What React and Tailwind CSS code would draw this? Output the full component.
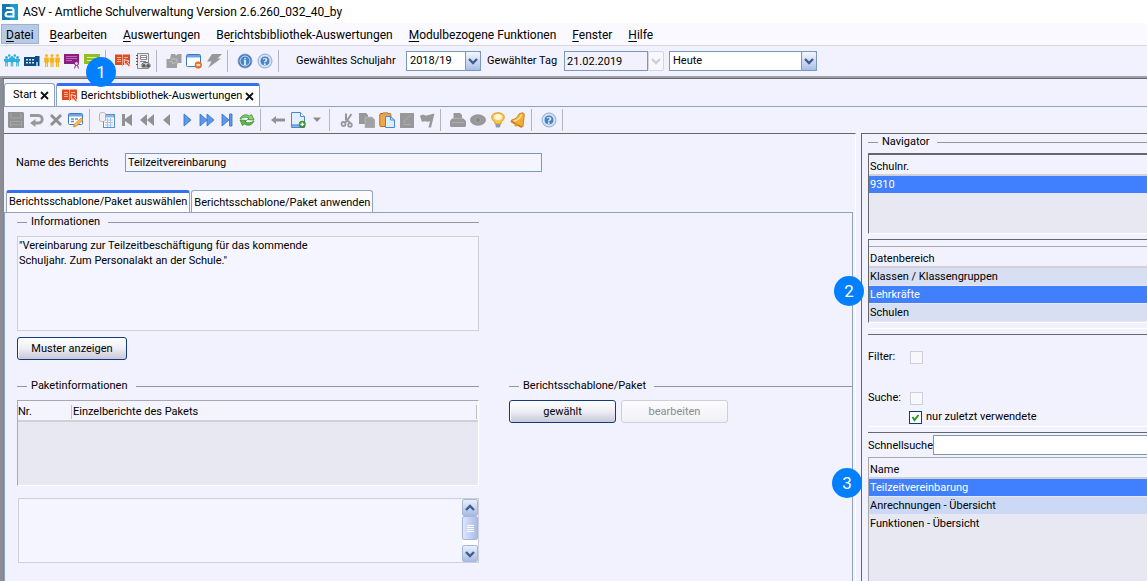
import React from 'react';
import clsx from 'clsx';

const Svg = ({ children, size = 16 }) => (
  <svg width={size} height={size} viewBox="0 0 16 16" className="block shrink-0" aria-hidden="true">{children}</svg>
);

const Pupils = () => (
  <Svg>
    <g fill="#2fb0dc">
      {[2.5, 8, 13.5].map((x) => <circle key={x} cx={x} cy="4.400" r="1.500" />)}
      {[5.2, 10.8].map((x) => <circle key={x} cx={x} cy="2.600" r="1.300" />)}
      <path d="M0 6h5l.2-1.500h5.600L11 6h5v2l-1.200 1V10h-2.600V9H9.300v1H6.700V9H3.800v1H1.200V9L0 8z" />
      <path d="M1.200 10h1v3.500h-1zM2.800 10h1v3.500h-1zM6.800 10h1v3.500h-1zM8.300 10h1v3.500h-1zM12.200 10h1v3.500h-1zM13.800 10h1v3.500h-1z" />
    </g>
  </Svg>
);
const School = () => (
  <Svg>
    <path d="M0 4h11V3h4.500v10H0z" fill="#0f4c81" />
    <path d="M2 6h2v1.500H2zM5 6h2v1.500H5zM8 6h2v1.500H8zM2 9h2v1.500H2zM5 9h2v1.500H5zM8 9h2v1.500H8z" fill="#cfe3f4" />
    <path d="M12 9h2v4h-2z" fill="#8eb8dc" />
  </Svg>
);
const Teachers = () => (
  <Svg>
    <g fill="#f5b21a">
      {[2.5, 8, 13.5].map((x) => (
        <g key={x} transform={`translate(${x} 0)`}>
          <circle cy="2.500" r="1.500" />
          <path d="M-2.300 4.500h4.600v5h-.8V14H.3v-4h-.6v4h-1.200V9.500h-.8z" />
        </g>
      ))}
    </g>
  </Svg>
);
const PurpleBoard = () => (
  <Svg>
    <path d="M0 1h15v10H0z" fill="#8c1d83" />
    <path d="M2 3.500h11M2 5.500h11M2 7.500h6" stroke="#b86cb2" />
    <circle cx="12.500" cy="10.500" r="2" fill="#e6c4e3" stroke="#8c1d83" />
    <path d="M11.500 12.500l-1 3M13.500 12.500l1 3" stroke="#8c1d83" />
  </Svg>
);
const GreenBubble = () => (
  <Svg>
    <path d="M0 1h16v10H8l-3 4v-4H0z" fill="#93c01f" />
    <path d="M3 4.500h10M3 7.500h10" stroke="#dcedb0" />
  </Svg>
);
const RedBook = () => (
  <Svg>
    <path d="M0 1.500h7l.5.700.5-.700h7V12H8l-.5 1-.5-1H0z" fill="#e2491c" />
    <path d="M7.500 2v10" stroke="#f7c0ad" strokeWidth=".8" />
    <path d="M2 4.500h4M2 6.500h4M2 8.500h4M9 4.500h4" stroke="#f7b39d" />
    <path d="M9 6.500l5 1.500-1.500 1.200 2.800 3.800-1.300 1.200-3-3.700-1.200 1.500z" fill="#e2491c" stroke="#fff" strokeWidth=".8" />
  </Svg>
);
const Cabinet = () => (
  <Svg>
    <path d="M2.500.5h11v15h-11z" fill="#e9e9ea" stroke="#8b8b8d" />
    <path d="M5.500 2.500h6v4h-6z" fill="#fff" stroke="#8b8b8d" />
    <path d="M6 4.500h5M5 8.500h6" stroke="#88a" />
    <path d="M1 2.500h2M1 5.500h2M1 8.500h2M1 11.500h2" stroke="#555" />
    <path d="M7 11l2-1.500h4l2 2v2.500H7z" fill="#c8c8ca" stroke="#666" />
    <circle cx="9" cy="12.500" r="1.500" fill="#555" /><circle cx="13" cy="12.500" r="1.500" fill="#555" />
  </Svg>
);
const Puzzle = () => (
  <Svg>
    <path d="M5 1h4l1 1.500L12 1h3.500v9H12l-1 2v3H.5V6H4z" fill="#a0a0a2" />
    <path d="M5 6h6v5M3 9l3-1 1 3 3-2" stroke="#c0c0c2" fill="none" />
  </Svg>
);
const WindowMinus = () => (
  <Svg>
    <rect x=".5" y="1.500" width="14" height="12" rx="1" fill="#fff" stroke="#3c78c8" />
    <path d="M1 2h13v2.500H1z" fill="#6ea2e4" />
    <circle cx="12.300" cy="12" r="3.300" fill="#ee7a2d" stroke="#c95a12" strokeWidth=".6" />
    <path d="M10.500 12h3.600" stroke="#fff" strokeWidth="1.500" />
  </Svg>
);
const Bolt = () => (
  <Svg><path d="M6 1h10l-4.500 4.500H15L2 15l3.500-6.500H1z" fill="#98989a" /></Svg>
);
const RoundIcon = ({ rim, text }) => (
  <Svg>
    <circle cx="8" cy="8" r="7" fill={rim} stroke="#7d9cc4" strokeWidth=".8" />
    <circle cx="8" cy="8" r="5" fill="#4a82c4" stroke="#e8f1fb" strokeWidth=".8" />
    <text x="8" y="11.500" textAnchor="middle" fontSize="10" fontWeight="700" fontFamily="Liberation Serif, serif" fill="#fff">{text}</text>
  </Svg>
);
const Info = () => <RoundIcon rim="#3f79be" text="i" />;
const Help = () => <RoundIcon rim="#cfe0f3" text="?" />;

const Save = () => (
  <Svg>
    <path d="M0 0h15l1 1v15H1l-1-1z" fill="#929294" />
    <path d="M3 1v5h10V1M2.500 15V9.500h11V15M3 12.500h10" stroke="#a4a4a6" fill="none" />
  </Svg>
);
const Undo = () => (
  <Svg>
    <path d="M2 3.500h8.500a3.500 3.500 0 010 7.500H6" fill="none" stroke="#98989a" strokeWidth="2.800" />
    <path d="M7.500 7v8L2 11z" fill="#98989a" />
  </Svg>
);
const Cross = () => (
  <Svg><path d="M3 3l10 10M13 3L3 13" stroke="#909092" strokeWidth="3" /></Svg>
);
const EditForm = () => (
  <Svg>
    <rect x=".5" y="1.500" width="14" height="11" rx="1" fill="#fff" stroke="#3c78c8" />
    <path d="M1 2h13v2.500H1z" fill="#6ea2e4" />
    <path d="M3 7h3M7 7h3M3 9.500h3" stroke="#5d8fd0" strokeWidth="1.500" />
    <path d="M5.500 15l1-3 6.500-6 2 2-6.500 6z" fill="#f8b94e" stroke="#c87f17" strokeWidth=".7" />
  </Svg>
);
const TableDoc = () => (
  <Svg>
    <rect x="4.500" y="2.500" width="11" height="13" fill="#fff" stroke="#5d8fd0" />
    <path d="M5 3h10v2.500H5z" fill="#8db7ea" />
    <path d="M6 8h8M6 10.500h8M6 13h8M8.500 6v9M11.500 6v9" stroke="#a4c2e8" />
    <path d="M.5 2c0-2 6-2 6 0v6c0 2-6 2-6 0z" fill="#f0f0ee" stroke="#a5a5a5" strokeWidth=".8" />
  </Svg>
);
const First = () => <Svg><path d="M3 2h3v5l7-5v12L6 9v5H3z" fill="#929294" /></Svg>;
const Rewind = () => <Svg><path d="M8 2v12L1 8zM15 2v12L8 8z" fill="#929294" /></Svg>;
const Prev = () => <Svg><path d="M11 2v12L4 8z" fill="#929294" /></Svg>;
const Next = () => <Svg><path d="M5 2v12l7-6z" fill="#5c9ae6" stroke="#2f6fc8" strokeWidth=".8" /></Svg>;
const Forward = () => <Svg><path d="M1 2v12l7-6zM8 2v12l7-6z" fill="#5c9ae6" stroke="#2f6fc8" strokeWidth=".8" /></Svg>;
const Last = () => <Svg><path d="M3 2v12l7-6zM10.500 2h2.500v12h-2.500z" fill="#5c9ae6" stroke="#2f6fc8" strokeWidth=".8" /></Svg>;
const Refresh = () => (
  <Svg>
    <path d="M1 7c1.500-4 6-5.500 9.500-3L12.500 2.500 15 8l-6.500-.5 1.500-1.500C7 4.500 4 5 1 7z" fill="#8fd070" stroke="#358a2b" strokeWidth=".8" />
    <path d="M15 9c-1.500 4-6 5.500-9.500 3l-2 1.500L1 8l6.500.5L6 10c3 1.500 6 1 9-1z" fill="#5fb84a" stroke="#358a2b" strokeWidth=".8" />
  </Svg>
);
const Back = () => <Svg><path d="M1 8l5-4v2.500h9v3H6V12z" fill="#929294" /></Svg>;
const NewDoc = () => (
  <Svg>
    <path d="M1.500.5h9l4 4v11h-13z" fill="#e3effc" stroke="#4b86d1" />
    <path d="M2 13.500h9" stroke="#6aa0e2" strokeWidth="2.500" />
    <path d="M10.500.5v4h4" fill="#fff" stroke="#4b86d1" />
    <circle cx="12.300" cy="12.300" r="3.200" fill="#4f9d36" stroke="#357a22" strokeWidth=".6" />
    <path d="M10.500 12.300h3.600M12.300 10.500v3.600" stroke="#fff" strokeWidth="1.200" />
  </Svg>
);
const Caret = () => <Svg size={8}><path d="M0 3h16l-8 9z" fill="#8d8d90" /></Svg>;
const Cut = () => (
  <Svg>
    <path d="M12.500 2L6.500 10.500M7 1.500v6l4.500 3.500" fill="none" stroke="#98989a" strokeWidth="2" />
    <circle cx="4.500" cy="12" r="2" fill="none" stroke="#98989a" strokeWidth="1.800" />
    <circle cx="11" cy="13" r="1.800" fill="none" stroke="#98989a" strokeWidth="1.800" />
  </Svg>
);
const Copy = () => (
  <Svg>
    <path d="M0 1h7l2 2v9H0z" fill="#98989a" />
    <path d="M6 5h7l3 3v8H6z" fill="#a2a2a4" stroke="#bcbcc0" strokeWidth=".7" />
  </Svg>
);
const Paste = () => (
  <Svg>
    <rect x=".8" y="1.500" width="11" height="13" rx="1" fill="#eda84a" stroke="#b56e17" />
    <path d="M4 0h5v3H4z" fill="#c8a474" />
    <path d="M6.500 4.500h5l4 3.500v7.500h-9z" fill="#dfecfc" stroke="#4b86d1" />
    <path d="M11.500 4.500V8h4" fill="none" stroke="#4b86d1" />
  </Svg>
);
const EditDoc = () => (
  <Svg>
    <path d="M1 1h14v15H1z" fill="#98989a" />
    <path d="M5 11l1-3 6-5M4 12.500h8" stroke="#acacae" fill="none" />
  </Svg>
);
const Flag = () => (
  <Svg><path d="M1 4c4-3 5 1 8-1l6.500-1.500L12 15.500H9.500L11 9c-3 2-5-1-8 1z" fill="#98989a" /></Svg>
);
const Printer = () => (
  <Svg>
    <path d="M3.500 1h6.500l2 2v3.500h1.500L16 9v5l-1 1H1l-1-1V9l2-2.500h1.500z" fill="#98989a" />
    <path d="M2 10.500h12M3.500 6.500H12" stroke="#adadaf" />
  </Svg>
);
const Eye = () => (
  <Svg>
    <ellipse cx="8" cy="8" rx="8" ry="5.800" fill="#98989a" />
    <circle cx="8" cy="8" r="2.500" fill="#88888a" stroke="#a6a6a8" />
  </Svg>
);
const Bulb = () => (
  <Svg>
    <path d="M8 .8c-8 0-7.500 7-3 9.200V12h6v-2c4.500-2.200 5-9.200-3-9.200z" fill="#fdc652" stroke="#e09a1e" />
    <ellipse cx="8" cy="5" rx="4" ry="3" fill="#fff6d6" />
    <path d="M5.500 12h5v2l-1 1.500h-3l-1-1.500z" fill="#8d99a8" />
  </Svg>
);
const Bell = () => (
  <Svg>
    <path d="M12 .8c1.500 0 2.300.7 2.300 2.200L13 14.500l-2 .8L1 10l.5-2C5 7.500 8 5 9 2z" fill="#f4ac33" stroke="#bd7610" strokeWidth=".8" />
    <path d="M4 9c4-1 6.500-3.500 7.500-6.500" stroke="#ffe2a0" strokeWidth="1.300" fill="none" />
    <path d="M2 9.500L12 15" stroke="#bd7610" />
    <circle cx="6" cy="13" r="1.600" fill="#e19b25" />
  </Svg>
);

const mainTools = [
  [['Schüler', Pupils], ['Schule', School], ['Lehrkräfte', Teachers], ['Unterricht', PurpleBoard], ['Nachrichten', GreenBubble]],
  [['Berichtsbibliothek', RedBook], ['Ausgaben', Cabinet]],
  [['Module', Puzzle], ['Fenster schließen', WindowMinus], ['Schnellzugriff', Bolt]],
  [['Information', Info], ['Hilfe', Help]],
];

const reportTools = [
  [['Speichern', Save], ['Rückgängig', Undo], ['Löschen', Cross], ['Bearbeiten', EditForm]],
  [['Liste', TableDoc], ['Erster', First], ['Schnell zurück', Rewind], ['Vorheriger', Prev], ['Nächster', Next], ['Schnell vor', Forward], ['Letzter', Last], ['Aktualisieren', Refresh]],
  [['Zurück', Back], ['Neu', NewDoc], ['Neu Auswahl', Caret]],
  [['Ausschneiden', Cut], ['Kopieren', Copy], ['Einfügen', Paste], ['Notiz', EditDoc], ['Markieren', Flag]],
  [['Drucken', Printer], ['Vorschau', Eye], ['Hinweis', Bulb], ['Erinnerung', Bell]],
  [['Kontexthilfe', Help]],
];

const menu = [
  ['', 'D', 'atei'],
  ['', 'B', 'earbeiten'],
  ['', 'A', 'uswertungen'],
  ['Be', 'r', 'ichtsbibliothek-Auswertungen'],
  ['', 'M', 'odulbezogene Funktionen'],
  ['', 'F', 'enster'],
  ['', 'H', 'ilfe'],
];

const ToolGroups = ({ groups }) => groups.map((group, i) => (
  <div key={i} className="flex shrink-0 items-center border-r border-[#b4b4c0] h-[22px] pl-[7px] pr-[3px] first:pl-[2px]">
    {group.map(([label, Icon]) => (
      <button key={label} type="button" aria-label={label} className={clsx('h-5 flex items-center justify-center', Icon === Caret ? 'w-[18px]' : 'w-5')}><Icon /></button>
    ))}
  </div>
));

const Badge = ({ children, className }) => (
  <span className={clsx('absolute z-10 w-[30px] h-[30px] rounded-full bg-[#0080ff] text-white text-[17px] leading-[30px] text-center', className)}>
    {children}
  </span>
);

const Chevron = ({ up, faded }) => (
  <svg width="10" height="8" viewBox="0 0 10 8" aria-hidden="true">
    <path d={up ? 'M1 6l4-4 4 4' : 'M1 2l4 4 4-4'} fill="none" stroke={faded ? '#cfcfdb' : '#3f5f8c'} strokeWidth="2.400" />
  </svg>
);

const Select = ({ id, options, className }) => (
  <div className={clsx('relative h-5 flex', className)}>
    <select id={id} className="appearance-none w-full h-full bg-white border border-[#7a98be] pl-[3px] pr-5 text-[11px]">
      {options.map((o) => <option key={o}>{o}</option>)}
    </select>
    <span className="pointer-events-none absolute right-0 top-0 w-4 h-full rounded-[2px] border border-[#7a98be] bg-linear-to-b from-[#f4f7ff] to-[#a9bfe8] flex items-center justify-center"><Chevron /></span>
  </div>
);

const Heading = ({ children, className }) => (
  <div className={clsx('flex items-center gap-1 h-4', className)}>
    <span className="w-[10px] h-px bg-[#94949c]" />
    <h2 className="whitespace-nowrap pr-1">{children}</h2>
    <span className="flex-1 h-px bg-[#94949c]" />
  </div>
);

const PushButton = ({ children, disabled, className }) => (
  <button
    type="button"
    disabled={disabled}
    className={clsx('h-[23px] rounded-[3px] border text-center', disabled ? 'border-[#cfcfdb] bg-linear-to-b from-[#fcfcff] to-[#f0f0f6] text-[#8c8c8c]' : 'border-[#123a7a] bg-linear-to-b from-white via-[#ededf6] to-[#c8c8d8] shadow-[inset_1px_0_0_#fff]', className)}
  >
    {children}
  </button>
);

const rowColors = {
  selected: 'bg-[#4080ff] text-white',
  tinted: 'bg-[#d9dff2]',
  light: 'bg-[#cbd9f6]',
  plain: 'bg-[#e8e8f2]',
};

const NavTable = ({ head, rows }) => (
  <table className="w-full border-separate border-spacing-0 text-left">
    <thead>
      <tr><th className="h-[21px] p-0 pl-px pt-1 font-normal border-b-2 border-[#d0d0d8]">{head}</th></tr>
    </thead>
    <tbody>
      {rows.map(([name, kind]) => (
        <tr key={name}><td className={clsx('h-[18px] p-0 pl-px pt-px border-b border-[#e8e8f2]', rowColors[kind])}>{name}</td></tr>
      ))}
    </tbody>
  </table>
);

const CloseX = () => (
  <svg width="9" height="9" viewBox="0 0 9 9" aria-hidden="true"><path d="M1 1l7 7M8 1L1 8" stroke="#111" strokeWidth="1.800" /></svg>
);

const ReportForm = () => (
  <main className="flex-1 min-w-0 flex flex-col border-t border-[#66666c] border-r border-r-white pr-[2px]">
    <div className="flex items-center pl-3 pt-[19px]">
      <label htmlFor="report-name" className="w-[109px]">Name des Berichts</label>
      <input id="report-name" defaultValue="Teilzeitvereinbarung" className="w-[417px] h-[19px] px-[2px] border border-[#7a98be] bg-[#f5f5ff]" />
    </div>

    <div className="flex items-end gap-px pl-[2px] pt-[18px]" role="tablist">
      <button type="button" role="tab" aria-selected="true" className="h-[22px] px-[2px] pb-px rounded-t-[3px] border border-b-0 border-[#8fa3c0] border-t-3 border-t-[#3370f0] bg-white whitespace-nowrap">Berichtsschablone/Paket auswählen</button>
      <button type="button" role="tab" aria-selected="false" className="h-[22px] px-[2px] pt-[3px] rounded-t-[3px] border border-b-0 border-[#8fa3c0] bg-[#fbfbff] whitespace-nowrap">Berichtsschablone/Paket anwenden</button>
    </div>

    <div className="flex-1 flex gap-[30px] border border-b-0 border-[#8fa3c0] pl-3 pt-px">
      <div className="w-[462px]">
        <Heading>Informationen</Heading>
        <div className="mt-[6px] h-[95px] border border-[#cfcfdb] bg-[#f5f5ff] pl-px pt-px leading-[15px]">
          "Vereinbarung zur Teilzeitbeschäftigung für das kommende<br />Schuljahr. Zum Personalakt an der Schule."
        </div>
        <PushButton className="mt-[6px] w-[110px] block">Muster anzeigen</PushButton>

        <Heading className="mt-[18px]">Paketinformationen</Heading>
        <div className="mt-[6px] h-[86px] border border-[#a8a8ae] border-r-white border-b-white bg-[#e8e8f2]">
          <table className="w-full border-separate border-spacing-0 text-left bg-[#f4f4ff]">
            <thead>
              <tr>
                <th className="w-[54px] h-[21px] p-0 pt-[3px] font-normal border-b-2 border-[#d0d0d8]"><span className="block border-r border-[#c0c0cc]">Nr.</span></th>
                <th className="h-[21px] p-0 pt-[3px] pr-px font-normal border-b-2 border-[#d0d0d8]"><span className="block border-r border-[#c0c0cc] pl-px">Einzelberichte des Pakets</span></th>
              </tr>
            </thead>
          </table>
        </div>

        <div className="mt-3 ml-px h-[65px] flex border border-[#cfcfdb] bg-[#f5f5ff]">
          <textarea aria-label="Beschreibung" className="flex-1 resize-none outline-none overflow-hidden" />
          <div className="w-4 flex flex-col bg-white">
            <button type="button" aria-label="Nach oben" className="h-[17px] rounded-[2px] border border-[#a5b8dc] bg-linear-to-b from-[#e9f0ff] to-[#a9bce2] flex items-center justify-center"><Chevron up /></button>
            <div className="h-6 rounded-[2px] border border-[#a5b8dc] bg-linear-to-r from-[#dbe5ff] to-[#a9bce8] flex flex-col gap-px items-center justify-center">
              {[0, 1, 2, 3].map((n) => <span key={n} className="w-[7px] h-px bg-white" />)}
            </div>
            <button type="button" aria-label="Nach unten" className="mt-auto h-[17px] rounded-[2px] border border-[#a5b8dc] bg-linear-to-b from-[#e9f0ff] to-[#a9bce2] flex items-center justify-center"><Chevron /></button>
          </div>
        </div>
      </div>

      <div className="flex-1 pt-[164px]">
        <Heading>Berichtsschablone/Paket</Heading>
        <div className="mt-[6px] flex gap-[5px]">
          <PushButton className="w-[107px]">gewählt</PushButton>
          <PushButton disabled className="w-[107px]">bearbeiten</PushButton>
        </div>
      </div>
    </div>
  </main>
);

const Navigator = () => (
  <aside className="w-[286px] shrink-0 ml-[5px] flex flex-col border-t border-l border-[#66666c] pl-[6px]">
    <Heading>Navigator</Heading>
    <div className="mt-[3px] h-[81px] border-t-2 border-l border-[#66666c] border-b border-b-white bg-[#e8e8f2]">
      <div className="bg-[#f2f2ff]"><NavTable head="Schulnr." rows={[['9310', 'selected']]} /></div>
    </div>

    <div className="relative mt-[5px] border-t border-l border-[#66666c] border-b border-b-white pt-[6px]">
      <div className="border-t border-[#a8a8ae]">
        <NavTable head="Datenbereich" rows={[['Klassen / Klassengruppen', 'tinted'], ['Lehrkräfte', 'selected'], ['Schulen', 'tinted']]} />
      </div>
      <Badge className="-left-[35px] top-[36px]">2</Badge>
    </div>

    <div className="mt-[5px] border-t border-white" />
    <div className="mt-[5px] border-t border-[#66666c] border-b border-b-white pt-[15px] pb-[2px]">
      <div className="flex items-center h-[14px]">
        <label htmlFor="filter" className="w-[42px]">Filter:</label>
        <input id="filter" type="checkbox" className="appearance-none w-[13px] h-[13px] border border-[#cfcfdb] bg-[#f8f8fc]" />
      </div>
      <div className="flex items-center h-[14px] mt-[27px]">
        <label htmlFor="suche" className="w-[42px]">Suche:</label>
        <input id="suche" type="checkbox" className="appearance-none w-[13px] h-[13px] border border-[#cfcfdb] bg-[#f8f8fc]" />
      </div>
      <label className="relative flex items-center gap-1 h-[14px] mt-[5px] pl-[41px]">
        <input type="checkbox" defaultChecked className="peer appearance-none w-[13px] h-[13px] border border-[#123a7a] bg-white" />
        <svg width="13" height="13" viewBox="0 0 13 13" className="absolute left-[41px] hidden peer-checked:block pointer-events-none" aria-hidden="true">
          <path d="M3.500 6l2 3L9.500 4" fill="none" stroke="#22a022" strokeWidth="2" />
        </svg>
        nur zuletzt verwendete
      </label>
    </div>

    <div className="relative mt-[5px] flex-1 flex flex-col border-t border-[#66666c]">
      <div className="flex items-center gap-[2px] pt-[2px]">
        <label htmlFor="quick" className="w-[63px] pt-[2px] whitespace-nowrap">Schnellsuche</label>
        <input id="quick" className="flex-1 min-w-0 h-5 px-1 bg-white border border-r-0 border-[#7a98be]" />
      </div>
      <div className="mt-[2px] flex-1 border-t border-l border-[#a8a8ae] bg-[#e8e8f2]">
        <div className="bg-[#f2f2ff]">
          <NavTable head="Name" rows={[['Teilzeitvereinbarung', 'selected'], ['Anrechnungen - Übersicht', 'light'], ['Funktionen - Übersicht', 'plain']]} />
        </div>
      </div>
      <Badge className="-left-[36px] top-[35px]">3</Badge>
    </div>
  </aside>
);

const App = () => (
  <div className="min-h-screen flex flex-col bg-[#f2f2ff] text-black text-[11px] leading-[14px] font-[Roboto,'Noto_Sans',sans-serif]">
    <header className="flex items-center gap-[5px] h-[23px] pl-[2px] bg-white text-[12px]">
      <Svg>
        <path d="M0 0h16v16H0z" fill="#1278ae" />
        <path d="M8 0h8v16H8z" fill="#1c9ad0" />
        <path d="M4 4h5.500q2 0 2 2.500v6H6q-2.500 0-2.500-2T6 8h5" fill="none" stroke="#fff" strokeWidth="2" />
      </Svg>
      <h1>ASV - Amtliche Schulverwaltung Version 2.6.260_032_40_by</h1>
    </header>

    <nav className="flex items-center gap-[6px] h-[23px] pl-px bg-[#f9f9ff] border-b border-[#d8d8e0] text-[12px]">
      {menu.map(([pre, key, post], i) => (
        <button key={post} type="button" className={clsx('h-5 px-1 pt-px border whitespace-nowrap', i === 0 ? 'bg-[#b8cbe6] border-[#9db2d0]' : 'border-transparent')}>
          {pre}<span className="underline underline-offset-2">{key}</span>{post}
        </button>
      ))}
    </nav>

    <div className="relative flex items-center h-8 border-b-2 border-[#a0a0a6]">
      <ToolGroups groups={mainTools} />
      <Badge className="left-[86px] top-[11px]">1</Badge>
      <label htmlFor="year" className="ml-[17px] w-[110px] whitespace-nowrap">Gewähltes Schuljahr</label>
      <Select id="year" options={['2018/19']} className="w-[75px]" />
      <label htmlFor="day" className="ml-[6px] w-[77px] whitespace-nowrap">Gewählter Tag</label>
      <input id="day" defaultValue="21.02.2019" className="w-[84px] h-5 px-[2px] border border-[#7a98be] bg-[#f2f2ff]" />
      <button type="button" disabled aria-label="Tag wählen" className="w-4 h-5 rounded-[2px] border border-[#d4d4e0] bg-[#f8f8fc] flex items-center justify-center"><Chevron faded /></button>
      <Select id="today" options={['Heute']} className="ml-[5px] w-[148px]" />
    </div>

    <div className="flex-1 flex flex-col border-t border-[#66666c] border-l-3 border-l-[#8c8c94]">
      <div className="flex-1 flex flex-col border-l border-[#7088a8]">
        <div className="flex items-end gap-px h-7 border-b border-[#8fa3c0]" role="tablist">
          <div role="tab" aria-selected="false" className="flex items-center gap-[3px] h-[23px] pl-2 pr-[5px] rounded-t-[3px] border border-b-0 border-[#8fa3c0] bg-white">
            <span>Start</span><button type="button" aria-label="Start schließen" className="flex"><CloseX /></button>
          </div>
          <div role="tab" aria-selected="true" className="flex items-center gap-[3px] h-[23px] px-[5px] rounded-t-[3px] border border-b-0 border-[#8fa3c0] border-t-3 border-t-[#3370f0] bg-white">
            <RedBook /><span className="whitespace-nowrap">Berichtsbibliothek-Auswertungen</span><button type="button" aria-label="Auswertungen schließen" className="flex"><CloseX /></button>
          </div>
        </div>
        <div className="flex items-center h-[26px]"><ToolGroups groups={reportTools} /></div>
        <div className="flex-1 flex">
          <ReportForm />
          <Navigator />
        </div>
      </div>
    </div>
  </div>
);

export default App;
